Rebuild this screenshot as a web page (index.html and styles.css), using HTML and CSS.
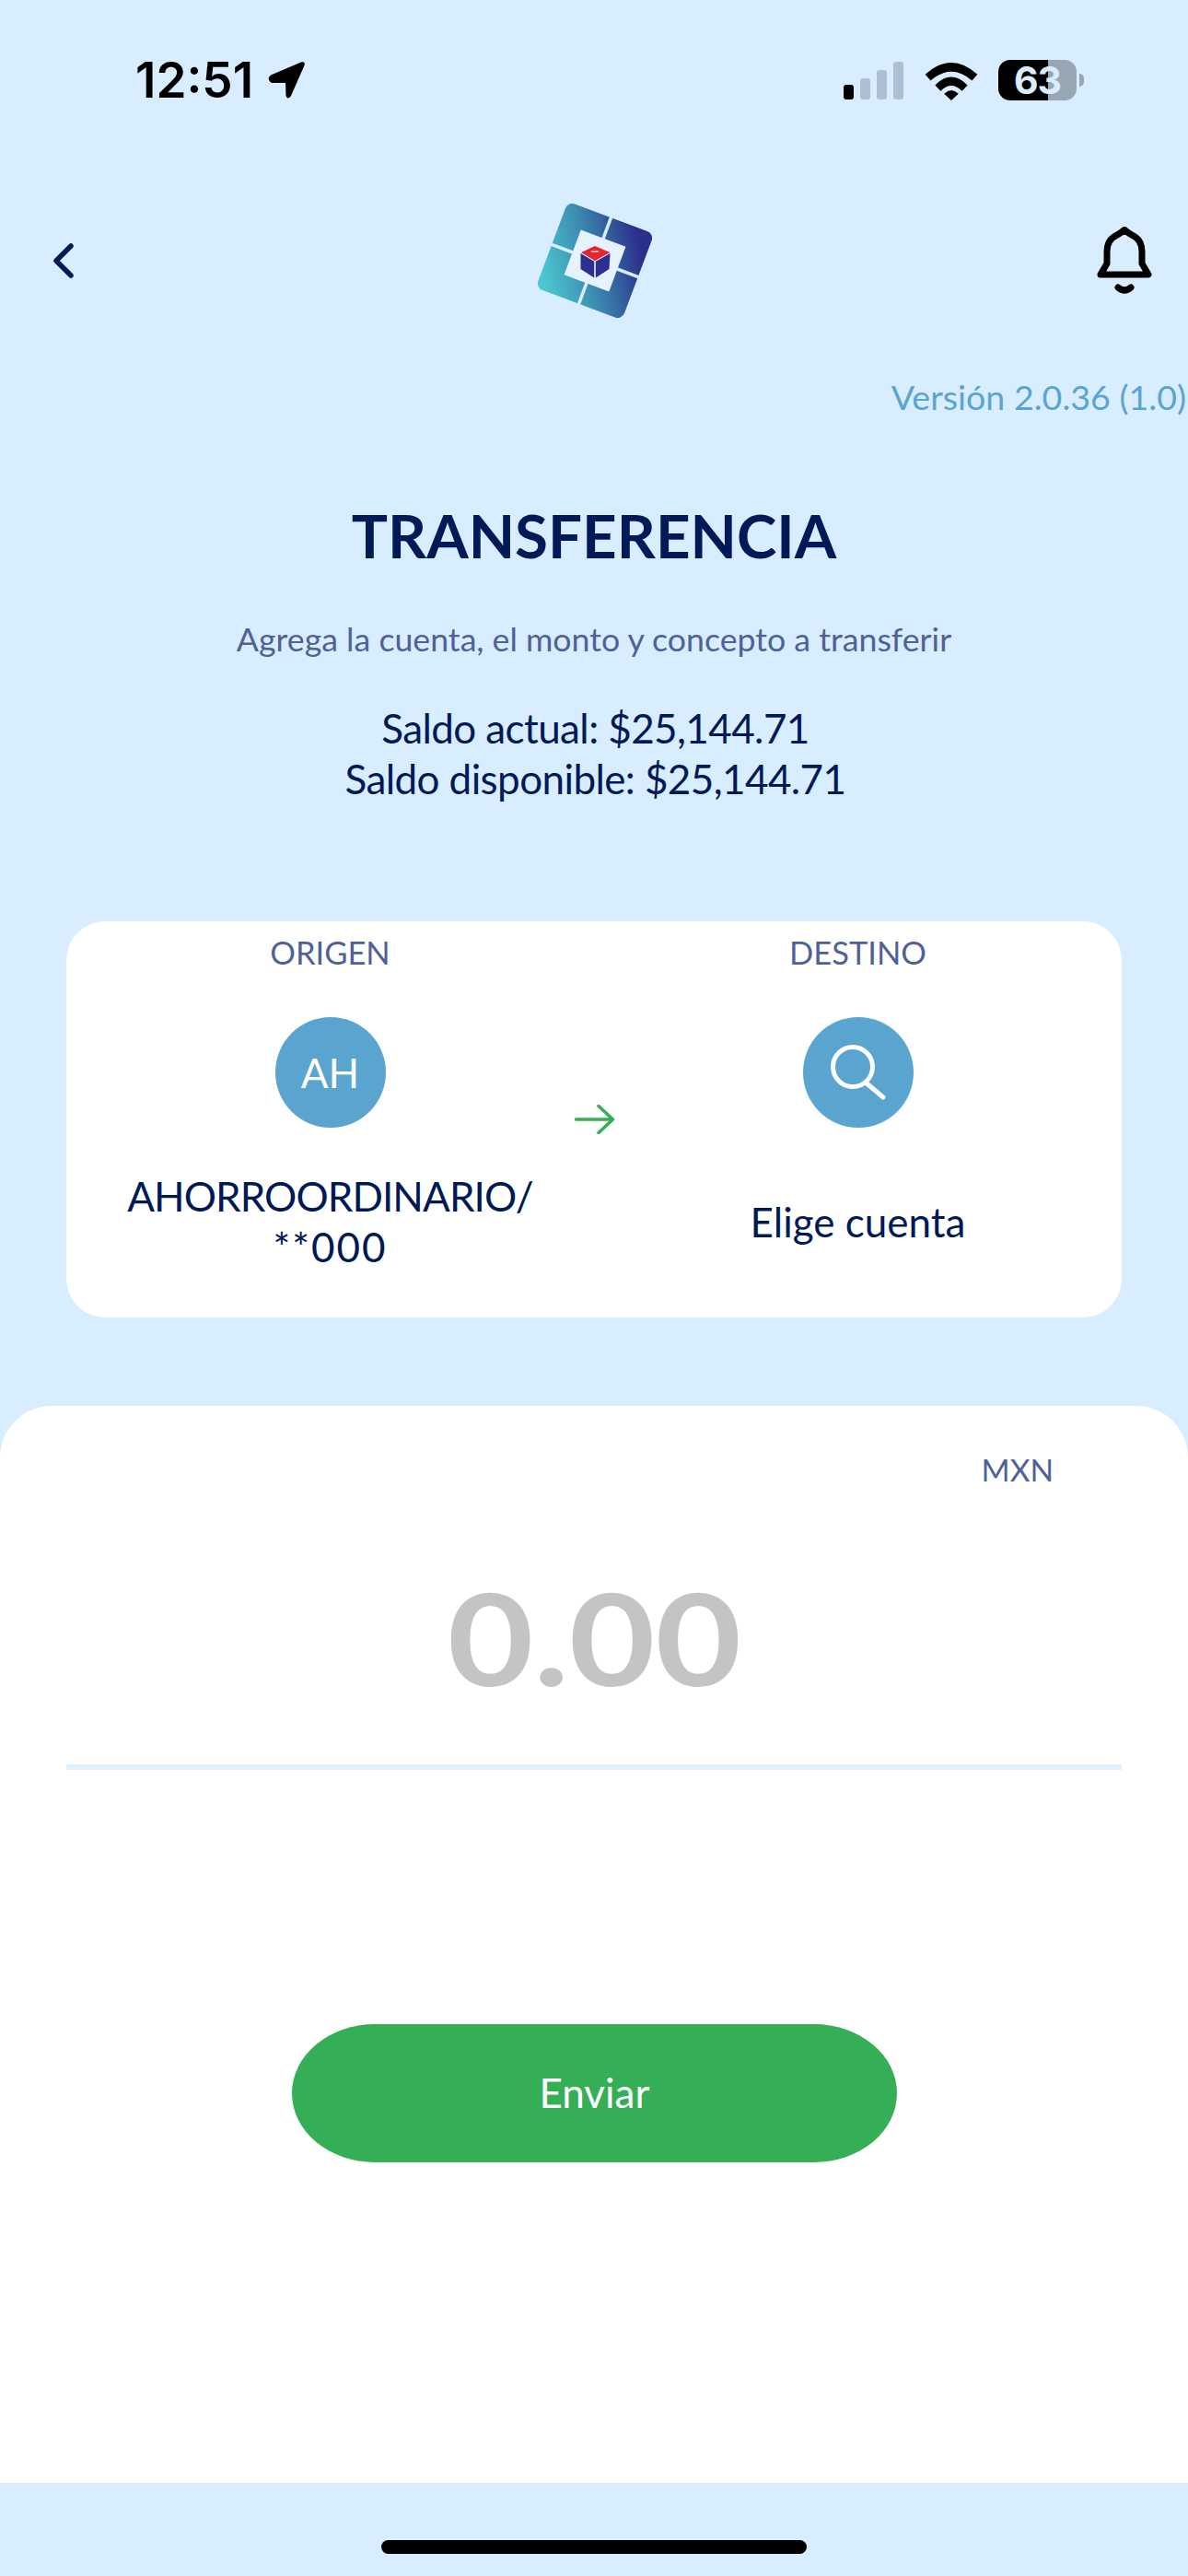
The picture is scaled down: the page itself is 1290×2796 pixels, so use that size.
FILE: index.html
```html
<!DOCTYPE html>
<html lang="es">
<head>
	<meta charset="UTF-8">
	<title>Transferencia</title>
	<link rel="stylesheet" href="styles.css">
</head>
<body>
	<div class="page">
		<div class="status">
			<div class="status-left">
				<span class="time">12:51</span>
				<svg class="loc" viewBox="0 0 42 42"><path d="M4 15.500 L37 1.500 Q42 0 40.500 5 L26 38 Q22.500 43 20.500 38 L20 24 L5 24 Q-1 20 4 15.500Z" fill="#000"/></svg>
			</div>
			<div class="status-right">
				<div class="signal">
					<span class="bar bar-on"></span>
					<span class="bar bar-2"></span>
					<span class="bar bar-3"></span>
					<span class="bar bar-4"></span>
				</div>
				<svg class="wifi" viewBox="0 0 60 44"><path d="M1 15 Q30 -11 59 15 L53 22 Q30 2 7 22Z M12 27 Q30 9 48 27 L42 33.500 Q30 22 18 33.500Z M22 36.500 Q30 29 38 36.500 L30 44Z" fill="#000"/></svg>
				<div class="battery">
					<div class="battery-body"><span class="battery-num">63</span></div>
					<span class="battery-nub"></span>
				</div>
			</div>
		</div>

		<div class="topbar">
			<svg class="back" viewBox="0 0 24 38"><path d="M20 3 L4 19 L20 35" fill="none" stroke="#001a57" stroke-width="5.500" stroke-linecap="round" stroke-linejoin="round"/></svg>
			<svg class="logo" viewBox="-62 -62 124 124">
				<defs>
					<linearGradient id="logoGrad" gradientUnits="userSpaceOnUse" x1="-50" y1="30" x2="42" y2="-30">
						<stop offset="0" stop-color="#4cc6cf"/>
						<stop offset=".45" stop-color="#3c8cb0"/>
						<stop offset="1" stop-color="#2b2e8a"/>
					</linearGradient>
				</defs>
				<g transform="rotate(20.500)">
					<rect x="-50" y="-50" width="100" height="100" rx="8" fill="url(#logoGrad)"/>
					<rect x="-26" y="-26" width="52" height="52" fill="#e6f3ff"/>
					<path d="M0 -51 V-25 M0 25 V51 M-51 0 H-25 M25 0 H51" stroke="#d8edff" stroke-width="3.500"/>
				</g>
				<path d="M0 -16 L16.500 -9 L0 0 L-15 -9Z" fill="#e8242f"/>
				<path d="M-15.500 -8 L-.8 .8 V18.500 L-15.500 9Z" fill="#2b2f8f"/>
				<path d="M.8 .8 L16.500 -8 L15.500 9 L.8 18.500Z" fill="#2b2f8f"/>
				<path d="M-4 -10 H4" stroke="#f4c9cc" stroke-width="1.600"/>
			</svg>
			<svg class="bell" viewBox="0 0 60 75"><path d="M4 52 L11 40 V27 Q11 14 22 9 Q26 7 30 3.500 Q34 7 38 9 Q49 14 49 27 V40 L56 52Z" fill="none" stroke="#000" stroke-width="7" stroke-linejoin="round"/><path d="M23 66 Q30 72 37 66" fill="none" stroke="#000" stroke-width="7" stroke-linecap="round"/></svg>
		</div>

		<div class="version">Versión 2.0.36 (1.0)</div>
		<h1 class="title">TRANSFERENCIA</h1>
		<p class="subtitle">Agrega la cuenta, el monto y concepto a transferir</p>
		<div class="saldos">
			<div>Saldo actual: $25,144.71</div>
			<div>Saldo disponible: $25,144.71</div>
		</div>

		<div class="card">
			<div class="col">
				<div class="col-label">ORIGEN</div>
				<div class="circle">AH</div>
				<div class="col-name">
					<div class="name-long">AHORROORDINARIO/</div>
					<div class="name-code">**000</div>
				</div>
			</div>
			<div class="col">
				<div class="col-label">DESTINO</div>
				<div class="circle">
					<svg class="search" viewBox="0 0 60 60"><circle cx="24" cy="24" r="21.500" fill="none" stroke="#fff" stroke-width="5"/><path d="M38 41 L57 57" stroke="#fff" stroke-width="5" stroke-linecap="round"/></svg>
				</div>
				<div class="col-name col-name-plain">Elige cuenta</div>
			</div>
			<svg class="arrow" viewBox="0 0 44 32"><path d="M1.500 16 H41 M26 1.500 L41.500 16 L26 30.500" fill="none" stroke="#34af55" stroke-width="3.500" stroke-linecap="round" stroke-linejoin="round"/></svg>
		</div>

		<div class="sheet">
			<div class="currency">MXN</div>
			<div class="amount"><span class="amount-num">0.00</span></div>
			<div class="rule"></div>
			<button class="send">Enviar</button>
		</div>

		<div class="footer"><span class="home"></span></div>
	</div>
</body>
</html>
```

FILE: styles.css
```css
* {
	padding: 0;
	margin: 0;
	box-sizing: border-box;
}
html, body {
	height: 100%;
}
body {
	background: #d8edff;
	font-family: "Lato", "Noto Sans", sans-serif;
	color: #001a57;
	overflow: hidden;
}
.page {
	width: 1290px;
	height: 2796px;
	display: flex;
	flex-direction: column;
}

/* status bar */
.status {
	height: 50px;
	margin-top: 62px;
	padding: 0 113px 0 147px;
	display: flex;
	justify-content: space-between;
	align-items: center;
}
.status-left {
	display: flex;
	align-items: center;
	gap: 15px;
}
.time {
	font-family: "Inter", sans-serif;
	font-size: 53px;
	font-weight: 600;
	letter-spacing: 0;
	color: #000;
	line-height: 50px;
}
.loc {
	width: 42px;
	height: 42px;
}
.status-right {
	display: flex;
	align-items: center;
}
.signal {
	display: flex;
	align-items: flex-end;
	gap: 7px;
	height: 41px;
}
.bar {
	width: 11px;
	border-radius: 3px;
	background: #aebfcf;
}
.bar-on { height: 16px; background: #000; }
.bar-2 { height: 23px; }
.bar-3 { height: 32px; }
.bar-4 { height: 41px; }
.wifi {
	width: 60px;
	height: 43px;
	margin-left: 22px;
}
.battery {
	display: flex;
	align-items: center;
	margin-left: 21px;
}
.battery-body {
	width: 85px;
	height: 44px;
	border-radius: 13px;
	background: linear-gradient(90deg, #000 0 54px, #98a7b4 54px);
	display: flex;
	justify-content: center;
	align-items: center;
}
.battery-num {
	font-family: "Inter", sans-serif;
	font-size: 41px;
	font-weight: 700;
	color: #d8edff;
	letter-spacing: -1px;
}
.battery-nub {
	width: 5px;
	height: 14px;
	margin-left: 3px;
	border-radius: 0 7px 7px 0;
	background: #98a7b4;
}

/* top bar */
.topbar {
	height: 124px;
	margin-top: 109px;
	padding: 0 39px;
	display: grid;
	grid-template-columns: 1fr 124px 1fr;
	align-items: center;
}
.back {
	width: 24px;
	height: 38px;
	margin-left: 18px;
}
.logo {
	width: 124px;
	height: 124px;
	margin-left: 1px;
}
.bell {
	width: 60px;
	height: 75px;
	justify-self: end;
}

.version {
	margin-top: 64px;
	padding-right: 2px;
	text-align: right;
	font-size: 37.600px;
	line-height: 44px;
	color: #5aa5d0;
}
.title {
	margin-top: 93px;
	text-align: center;
	font-size: 65.500px;
	line-height: 70px;
	font-weight: 700;
}
.subtitle {
	margin-top: 56px;
	text-align: center;
	font-size: 35.700px;
	line-height: 44px;
	color: #4f6196;
}
.saldos {
	margin-top: 47px;
	padding-left: 3px;
	text-align: center;
	font-size: 44px;
	line-height: 55px;
	letter-spacing: -.6px;
}

/* origen / destino */
.card {
	position: relative;
	width: 1146px;
	height: 430px;
	margin: 127px 0 0 72px;
	padding-top: 12px;
	background: #fff;
	border-radius: 42px;
	display: grid;
	grid-template-columns: 1fr 1fr;
}
.col {
	display: flex;
	flex-direction: column;
	align-items: center;
}
.col-label {
	font-size: 34.500px;
	line-height: 44px;
	color: #4f6196;
}
.circle {
	width: 120px;
	height: 120px;
	margin-top: 48px;
	border-radius: 50%;
	background: #5aa5d0;
	color: #fff;
	font-size: 44px;
	display: flex;
	justify-content: center;
	align-items: center;
}
.search {
	width: 60px;
	height: 60px;
}
.col-name {
	height: 110px;
	margin-top: 47px;
	text-align: center;
	font-size: 44px;
	line-height: 55px;
}
.name-long {
	letter-spacing: -.9px;
}
.name-code {
	letter-spacing: 2px;
}
.col-name-plain {
	display: flex;
	align-items: center;
}
.arrow {
	position: absolute;
	left: 552px;
	top: 199px;
	width: 44px;
	height: 32px;
}

/* monto */
.sheet {
	height: 1169px;
	margin-top: 96px;
	padding-top: 47px;
	background: #fff;
	border-radius: 56px 56px 0 0;
	display: flex;
	flex-direction: column;
}
.currency {
	align-self: flex-end;
	padding-right: 146px;
	font-size: 33.500px;
	line-height: 44px;
	color: #4f6196;
}
.amount {
	margin-top: 75px;
	text-align: center;
	font-size: 138px;
	line-height: 170px;
	font-weight: 700;
	color: #c4c4c4;
}
.amount-num {
	display: inline-block;
	transform: scaleX(1.17);
}
.rule {
	width: 1146px;
	height: 6px;
	margin: 53px 0 0 72px;
	background: #dff0ff;
}
.send {
	width: 657px;
	height: 150px;
	margin: 276px 0 0 317px;
	padding-bottom: 3px;
	border: 0;
	border-radius: 90px / 75px;
	background: #34af55;
	color: #fff;
	font-family: inherit;
	font-size: 44px;
}

.footer {
	flex: 1;
	display: flex;
	justify-content: center;
	padding-top: 62px;
}
.home {
	width: 462px;
	height: 15px;
	border-radius: 8px;
	background: #000;
}
```
